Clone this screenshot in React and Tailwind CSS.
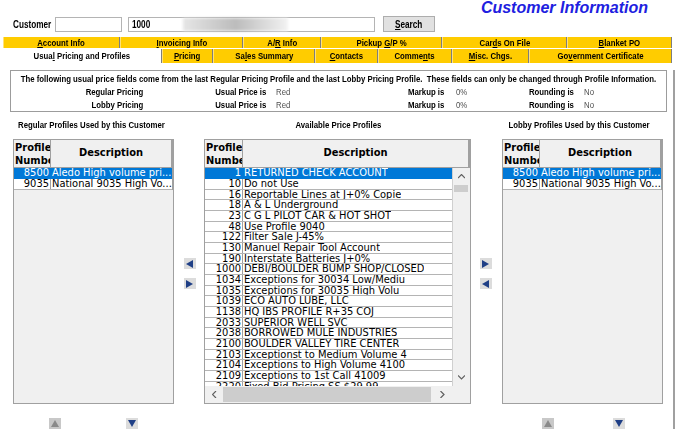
import React from "react";

const NB = "font-['Liberation_Sans',sans-serif]";
const DATA = "font-['DejaVu_Sans_Condensed','DejaVu_Sans',sans-serif]";
const SQ = "inline-block scale-x-[0.82]";

function Tri({ dir, color }) {
  const pts = {
    left: "7,0 7,8 0,4",
    right: "0,0 0,8 7,4",
    up: "0,7 8,7 4,0",
    down: "0,0 8,0 4,7",
  }[dir];
  return (
    <svg width="8" height="8" viewBox="0 0 8 8">
      <polygon points={pts} fill={color} />
    </svg>
  );
}

function ArrowBox({ dir, disabled }) {
  return (
    <div className={`w-[12px] h-[11px] flex items-center justify-center ${disabled ? "bg-[#c8c8c8]" : "bg-[#dcdcdc]"}`}>
      <Tri dir={dir} color={disabled ? "#8a8a8a" : "#1f3f86"} />
    </div>
  );
}

function Chev({ dir }) {
  const pts = {
    up: "0,4 3.5,0.5 7,4",
    down: "0,0.5 3.5,4 7,0.5",
    left: "4,0 0.5,3.5 4,7",
    right: "0.5,0 4,3.5 0.5,7",
  }[dir];
  const v = dir === "up" || dir === "down";
  return (
    <svg width={v ? 7 : 5} height={v ? 5 : 7} viewBox={v ? "0 0 7 5" : "0 0 5 7"}>
      <polyline points={pts} fill="none" stroke="#606060" strokeWidth="1.2" />
    </svg>
  );
}

const row1 = [
  { w: "w-[117px]", pre: "", u: "A", post: "ccount Info" },
  { w: "w-[123px]", pre: "", u: "I", post: "nvoicing Info" },
  { w: "w-[78px]", pre: "A/", u: "R", post: " Info" },
  { w: "w-[121px]", pre: "Pickup ", u: "G", post: "/P %" },
  { w: "w-[125px]", pre: "Car", u: "d", post: "s On File" },
  { w: "w-[105px]", pre: "", u: "B", post: "lanket PO" },
];

const row2 = [
  { w: "w-[159px]", pre: "Usua", u: "l", post: " Pricing and Profiles", sel: true },
  { w: "w-[51px]", pre: "", u: "P", post: "ricing" },
  { w: "w-[102px]", pre: "Sa", u: "l", post: "es Summary" },
  { w: "w-[63px]", pre: "", u: "C", post: "ontacts" },
  { w: "w-[74px]", pre: "Comme", u: "n", post: "ts" },
  { w: "w-[77px]", pre: "", u: "M", post: "isc. Chgs." },
  { w: "w-[143px]", pre: "Go", u: "v", post: "ernment Certificate" },
];

const available = [
  ["1", "RETURNED CHECK ACCOUNT"],
  ["10", "Do not Use"],
  ["16", "Reportable Lines at J+0% Copie"],
  ["18", "A & L Underground"],
  ["23", "C G L PILOT CAR & HOT SHOT"],
  ["48", "Use Profile 9040"],
  ["122", "Filter Sale J-45%"],
  ["130", "Manuel Repair Tool Account"],
  ["190", "Interstate Batteries J+0%"],
  ["1000", "DEBI/BOULDER BUMP SHOP/CLOSED"],
  ["1034", "Exceptions for 30034 Low/Mediu"],
  ["1035", "Exceptions for 30035 High Volu"],
  ["1039", "ECO AUTO LUBE, LLC"],
  ["1138", "HQ IBS PROFILE R+35 COJ"],
  ["2033", "SUPERIOR WELL SVC"],
  ["2038", "BORROWED MULE INDUSTRIES"],
  ["2100", "BOULDER VALLEY TIRE CENTER"],
  ["2103", "Exceptionst to Medium Volume 4"],
  ["2104", "Exceptions to High Volume 4100"],
  ["2109", "Exceptions to 1st Call 41009"],
  ["2220", "Fixed Bid Pricing SS $29.99"],
];

const used = [
  ["8500", "Aledo High volume pri..."],
  ["9035", "National 9035 High Vo..."],
];

function Row({ num, desc, sel, i, numW }) {
  const h = i % 3 === 2 ? "h-[10px]" : "h-[11px]";
  return (
    <div className={`flex ${h} shrink-0 border-b ${sel ? "bg-[#0078d7] text-white border-[#0078d7]" : "bg-white text-black border-[#b4b4b4]"} ${DATA} text-[11px] leading-[10px] overflow-hidden whitespace-nowrap`}>
      <div className={`${numW} shrink-0 text-right pr-[1px] border-r ${sel ? "border-[#0078d7]" : "border-[#a0a0a0]"}`}>{num}</div>
      <div className="pl-[1px] overflow-hidden">{desc}</div>
    </div>
  );
}

function Header({ numW }) {
  return (
    <div className={`flex h-[28px] shrink-0 ${DATA}`}>
      <div className={`${numW} shrink-0 border-r border-b border-[#a0a0a0] bg-[#f0f0f0] text-[11px] leading-[13px] font-bold pt-[1px] pl-[1px] overflow-hidden whitespace-nowrap`}>
        Profile<br />Number
      </div>
      <div className="flex-1 border-r-2 border-b border-[#a0a0a0] bg-[#f0f0f0] flex items-center justify-center text-[11px] font-bold">
        Description
      </div>
    </div>
  );
}

function SideTable() {
  return (
    <div className="w-[161px] h-[265px] shrink-0 border border-[#a0a0a0] bg-[#f0f0f0] flex flex-col overflow-hidden">
      <div className="w-[159px]">
        <Header numW="w-[37px]" />
        {used.map((r, i) => (
          <div key={i} className="border-r border-[#a0a0a0]">
            <Row num={r[0]} desc={r[1]} sel={i === 0} i={i} numW="w-[37px]" />
          </div>
        ))}
      </div>
    </div>
  );
}

function MiddleTable() {
  return (
    <div className="w-[267px] h-[265px] shrink-0 border border-[#a0a0a0] bg-[#f0f0f0] flex flex-col overflow-hidden">
      <Header numW="w-[38px]" />
      <div className="flex h-[218px] shrink-0">
        <div className="w-[248px] h-[218px] overflow-hidden flex flex-col border-r border-[#d0d0d0]">
          {available.map((r, i) => (
            <Row key={i} num={r[0]} desc={r[1]} sel={i === 0} i={i} numW="w-[38px]" />
          ))}
        </div>
        <div className="w-[16px] h-[218px] flex flex-col bg-[#f0f0f0]">
          <div className="h-[17px] flex items-center justify-center">
            <Chev dir="up" />
          </div>
          <div className="h-[7px] mx-[1px] bg-[#cdcdcd]" />
          <div className="flex-1" />
          <div className="h-[17px] flex items-center justify-center">
            <Chev dir="down" />
          </div>
        </div>
      </div>
      <div className="flex h-[17px] shrink-0">
        <div className="w-[248px] flex items-center">
          <div className="w-[18px] h-full flex items-center justify-center">
            <Chev dir="left" />
          </div>
          <div className="w-[208px] h-[15px] bg-[#cdcdcd]" />
          <div className="flex-1 h-full flex items-center justify-center">
            <Chev dir="right" />
          </div>
        </div>
        <div className="flex-1" />
      </div>
    </div>
  );
}

function PriceRow({ label, h }) {
  return (
    <div className={`flex ${h} items-center text-[9.5px] leading-[12px] whitespace-nowrap`}>
      <div className="w-[132px] flex justify-end"><span className={`${SQ} origin-right font-bold`}>{label}</span></div>
      <div className="w-[123px] flex justify-end"><span className={`${SQ} origin-right font-bold`}>Usual Price is</span></div>
      <div className="w-[10px]" />
      <div className="w-[100px]"><span className={`${SQ} origin-left text-[#505050]`}>Red</span></div>
      <div className="w-[68px] flex justify-end"><span className={`${SQ} origin-right font-bold`}>Markup is</span></div>
      <div className="w-[12px]" />
      <div className="w-[60px]"><span className={`${SQ} origin-left text-[#505050]`}>0%</span></div>
      <div className="w-[58px] flex justify-end"><span className={`${SQ} origin-right font-bold`}>Rounding is</span></div>
      <div className="w-[10px]" />
      <div><span className={`${SQ} origin-left text-[#505050]`}>No</span></div>
    </div>
  );
}

function TabLabel({ t }) {
  return (
    <span className={`${SQ} origin-center`}>
      {t.pre}<u>{t.u}</u>{t.post}
    </span>
  );
}

export default function App() {
  return (
    <div className={`w-[678px] h-[429px] bg-white overflow-hidden text-black ${NB}`}>
      {/* Title */}
      <div className="h-[16px] flex justify-end pr-[30px]">
        <div className="font-bold italic text-[16px] leading-[16px] text-[#2020e0]">
          Customer Information
        </div>
      </div>

      {/* Customer row */}
      <div className="h-[16px] flex items-center">
        <div className="ml-[13px] w-[42px] text-[10px] font-bold">
          <span className={`${SQ} origin-left`}>Customer</span>
        </div>
        <div className="w-[67px] h-[15px] border border-[#b4b4b4] bg-white" />
        <div className="ml-[6px] w-[247px] h-[15px] border border-[#b4b4b4] bg-white relative flex items-center pl-[3px]">
          <span className={`${SQ} origin-left text-[10px] font-bold`}>1000</span>
          <div className="absolute left-[54px] top-[0px] w-[105px] h-[13px] bg-gradient-to-r from-[#e6e6e6] via-[#bcbcbc] to-[#f2f2f2] blur-[1.5px]" />
        </div>
        <div className="ml-[8px] w-[52px] h-[16px] border border-[#adadad] bg-[#e1e1e1] flex items-center justify-center text-[10px] font-bold">
          <span className={`${SQ} origin-center`}><u>S</u>earch</span>
        </div>
      </div>

      {/* Tabs */}
      <div className="mt-[5px] ml-[3px]">
        <div className="flex h-[11px]">
          {row1.map((t, i) => (
            <div key={i} className={`${t.w} h-full bg-[#ffcc00] border-r border-r-[#7e7e7e] border-l border-l-[#ffe27a] flex items-center justify-center text-[9.5px] leading-[11px] font-bold whitespace-pre`}>
              <TabLabel t={t} />
            </div>
          ))}
        </div>
        <div className="flex h-[14px] mt-[1px]">
          {row2.map((t, i) => (
            <div key={i} className={`${t.w} h-full ${t.sel ? "bg-white" : "bg-[#ffcc00] border-l border-l-[#ffe27a]"} border-r border-r-[#7e7e7e] flex items-center justify-center text-[9.5px] leading-[14px] font-bold whitespace-pre`}>
              <TabLabel t={t} />
            </div>
          ))}
        </div>
      </div>

      {/* Panel */}
      <div className="ml-[3px] w-[672px] h-[366px] border-r-2 border-[#a0a0a0]">
        {/* Info box */}
        <div className="mt-[7px] ml-[7px] w-[657px] h-[42px] border border-[#9c9c9c]">
          <div className="pt-[3px] h-[14px] flex justify-center text-[9.5px] leading-[10px] font-bold whitespace-pre">
            <span className={`${SQ} origin-center`}>
              The following usual price fields come from the last Regular Pricing Profile and the last Lobby Pricing Profile.  These fields can only be changed through Profile Information.
            </span>
          </div>
          <PriceRow label="Regular Pricing" h="h-[13px]" />
          <PriceRow label="Lobby Pricing" h="h-[13px]" />
        </div>

        {/* Section labels */}
        <div className="flex h-[27px] items-center text-[9.5px] font-bold whitespace-nowrap">
          <div className="ml-[10px] w-[157px] flex justify-center">
            <span className={`${SQ} origin-center`}>Regular Profiles Used by this Customer</span>
          </div>
          <div className="w-[336px] flex justify-center">
            <span className={`${SQ} origin-center`}>Available Price Profiles</span>
          </div>
          <div className="w-[146px] flex justify-center">
            <span className={`${SQ} origin-center`}>Lobby Profiles Used by this Customer</span>
          </div>
        </div>

        {/* Tables */}
        <div className="flex ml-[10px]">
          <SideTable />
          <div className="w-[30px] shrink-0 pl-[10px] flex flex-col">
            <div className="mt-[119px]"><ArrowBox dir="left" /></div>
            <div className="mt-[9px]"><ArrowBox dir="right" /></div>
          </div>
          <MiddleTable />
          <div className="w-[31px] shrink-0 pl-[9px] flex flex-col">
            <div className="mt-[119px]"><ArrowBox dir="right" /></div>
            <div className="mt-[9px]"><ArrowBox dir="left" /></div>
          </div>
          <SideTable />
        </div>

        {/* Bottom arrows */}
        <div className="flex mt-[14px]">
          <div className="ml-[46px]"><ArrowBox dir="up" disabled /></div>
          <div className="ml-[65px]"><ArrowBox dir="down" /></div>
          <div className="ml-[404px]"><ArrowBox dir="up" disabled /></div>
          <div className="ml-[59px]"><ArrowBox dir="down" /></div>
        </div>
      </div>
    </div>
  );
}
